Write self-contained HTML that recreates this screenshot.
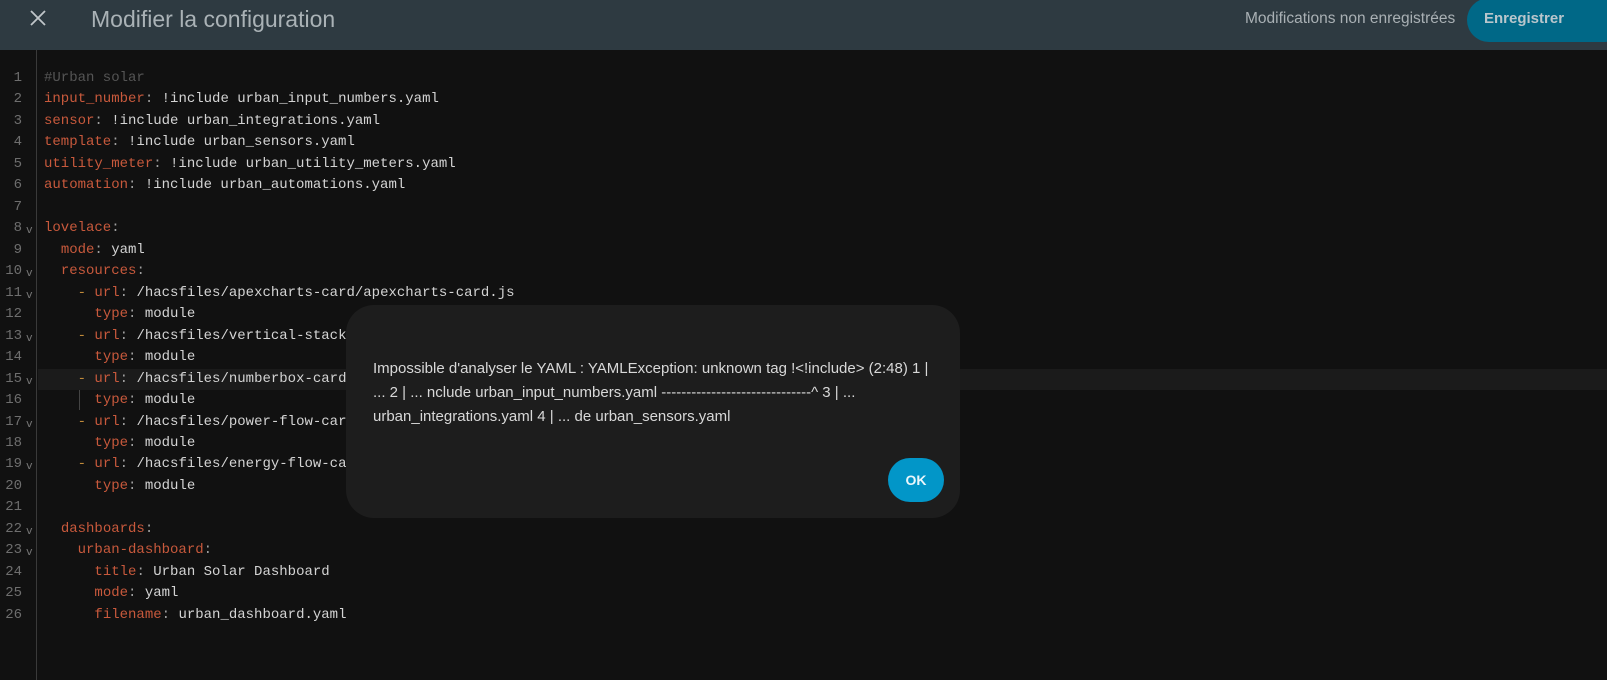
<!DOCTYPE html>
<html><head><meta charset="utf-8"><style>
*{margin:0;padding:0;box-sizing:border-box}
body{width:1607px;height:680px;background:#111111;overflow:hidden;position:relative;font-family:"Liberation Sans",sans-serif}
.hdr{position:absolute;left:0;top:0;width:1607px;height:50px;background:#2e3a41}
.hdr .x{position:absolute;left:30px;top:10px}
.hdr .t{position:absolute;left:91px;top:6px;color:#aab2b6;font-size:23px}
.hdr .u{position:absolute;left:1245px;top:10px;color:#a9b0b4;font-size:15.5px}
.hdr .b{position:absolute;left:1467px;top:-2px;width:160px;height:44px;background:#006887;border-radius:22px;color:#b9c6cc;font-size:15px;font-weight:bold;padding:12px 0 0 17px}
.gut{position:absolute;left:36px;top:50px;width:1px;height:630px;background:#3a3a3a}
.code{position:absolute;left:0;top:68px;font-family:"Liberation Mono",monospace;font-size:14px}
.ln{height:21.48px;line-height:21.48px;position:relative;white-space:pre;color:#d4d4d4}
.ln .n{position:absolute;left:0;width:22px;text-align:right;color:#6e6e6e}
.ln .f{position:absolute;left:26px;top:3px;color:#777;font-size:11px}
.ln .c{position:absolute;left:44px}
.k{color:#c8593c}.p{color:#a0a0a0}.cm{color:#555}.d{color:#c08a3a}
.hl{position:absolute;left:38px;top:369px;width:1569px;height:21px;background:#1b1b1b}
.dlg{position:absolute;left:346px;top:305px;width:614px;height:213px;background:#1d1d1d;border-radius:28px}
.dlg p{position:absolute;left:27px;top:52px;width:562px;color:#d8d8d8;font-size:15px;line-height:24px}
.ok{position:absolute;left:542px;top:153px;width:56px;height:44px;border-radius:22px;background:#0296c8;color:#eaf6fb;font-weight:bold;font-size:14px;text-align:center;line-height:44px}
</style></head><body>
<div class="hdr"><svg class="x" width="16" height="16" viewBox="0 0 16 16"><path d="M1 1L15 15M15 1L1 15" stroke="#c0c6c9" stroke-width="1.8"/></svg><span class="t">Modifier la configuration</span><span class="u">Modifications non enregistrées</span><div class="b">Enregistrer</div></div>
<div class="gut"></div>
<div class="hl"></div>
<div style="position:absolute;left:79px;top:390px;width:1px;height:20px;background:#444"></div>
<div class="code">
<div class="ln"><span class="n">1</span><span class="c cm">#Urban solar</span></div>
<div class="ln"><span class="n">2</span><span class="c"><span class="k">input_number</span><span class="p">:</span> !include urban_input_numbers.yaml</span></div>
<div class="ln"><span class="n">3</span><span class="c"><span class="k">sensor</span><span class="p">:</span> !include urban_integrations.yaml</span></div>
<div class="ln"><span class="n">4</span><span class="c"><span class="k">template</span><span class="p">:</span> !include urban_sensors.yaml</span></div>
<div class="ln"><span class="n">5</span><span class="c"><span class="k">utility_meter</span><span class="p">:</span> !include urban_utility_meters.yaml</span></div>
<div class="ln"><span class="n">6</span><span class="c"><span class="k">automation</span><span class="p">:</span> !include urban_automations.yaml</span></div>
<div class="ln"><span class="n">7</span></div>
<div class="ln"><span class="n">8</span><span class="f">v</span><span class="c"><span class="k">lovelace</span><span class="p">:</span></span></div>
<div class="ln"><span class="n">9</span><span class="c">  <span class="k">mode</span><span class="p">:</span> yaml</span></div>
<div class="ln"><span class="n">10</span><span class="f">v</span><span class="c">  <span class="k">resources</span><span class="p">:</span></span></div>
<div class="ln"><span class="n">11</span><span class="f">v</span><span class="c">    <span class="d">-</span> <span class="k">url</span><span class="p">:</span> /hacsfiles/apexcharts-card/apexcharts-card.js</span></div>
<div class="ln"><span class="n">12</span><span class="c">      <span class="k">type</span><span class="p">:</span> module</span></div>
<div class="ln"><span class="n">13</span><span class="f">v</span><span class="c">    <span class="d">-</span> <span class="k">url</span><span class="p">:</span> /hacsfiles/vertical-stack</span></div>
<div class="ln"><span class="n">14</span><span class="c">      <span class="k">type</span><span class="p">:</span> module</span></div>
<div class="ln"><span class="n">15</span><span class="f">v</span><span class="c">    <span class="d">-</span> <span class="k">url</span><span class="p">:</span> /hacsfiles/numberbox-card</span></div>
<div class="ln"><span class="n">16</span><span class="c">      <span class="k">type</span><span class="p">:</span> module</span></div>
<div class="ln"><span class="n">17</span><span class="f">v</span><span class="c">    <span class="d">-</span> <span class="k">url</span><span class="p">:</span> /hacsfiles/power-flow-car</span></div>
<div class="ln"><span class="n">18</span><span class="c">      <span class="k">type</span><span class="p">:</span> module</span></div>
<div class="ln"><span class="n">19</span><span class="f">v</span><span class="c">    <span class="d">-</span> <span class="k">url</span><span class="p">:</span> /hacsfiles/energy-flow-ca</span></div>
<div class="ln"><span class="n">20</span><span class="c">      <span class="k">type</span><span class="p">:</span> module</span></div>
<div class="ln"><span class="n">21</span></div>
<div class="ln"><span class="n">22</span><span class="f">v</span><span class="c">  <span class="k">dashboards</span><span class="p">:</span></span></div>
<div class="ln"><span class="n">23</span><span class="f">v</span><span class="c">    <span class="k">urban-dashboard</span><span class="p">:</span></span></div>
<div class="ln"><span class="n">24</span><span class="c">      <span class="k">title</span><span class="p">:</span> Urban Solar Dashboard</span></div>
<div class="ln"><span class="n">25</span><span class="c">      <span class="k">mode</span><span class="p">:</span> yaml</span></div>
<div class="ln"><span class="n">26</span><span class="c">      <span class="k">filename</span><span class="p">:</span> urban_dashboard.yaml</span></div>
</div>
<div class="dlg"><p>Impossible d'analyser le YAML : YAMLException: unknown tag !&lt;!include&gt; (2:48) 1 |<br>... 2 | ... nclude urban_input_numbers.yaml ------------------------------^ 3 | ... urban_integrations.yaml 4 | ... de urban_sensors.yaml</p><div class="ok">OK</div></div>
</body></html>
